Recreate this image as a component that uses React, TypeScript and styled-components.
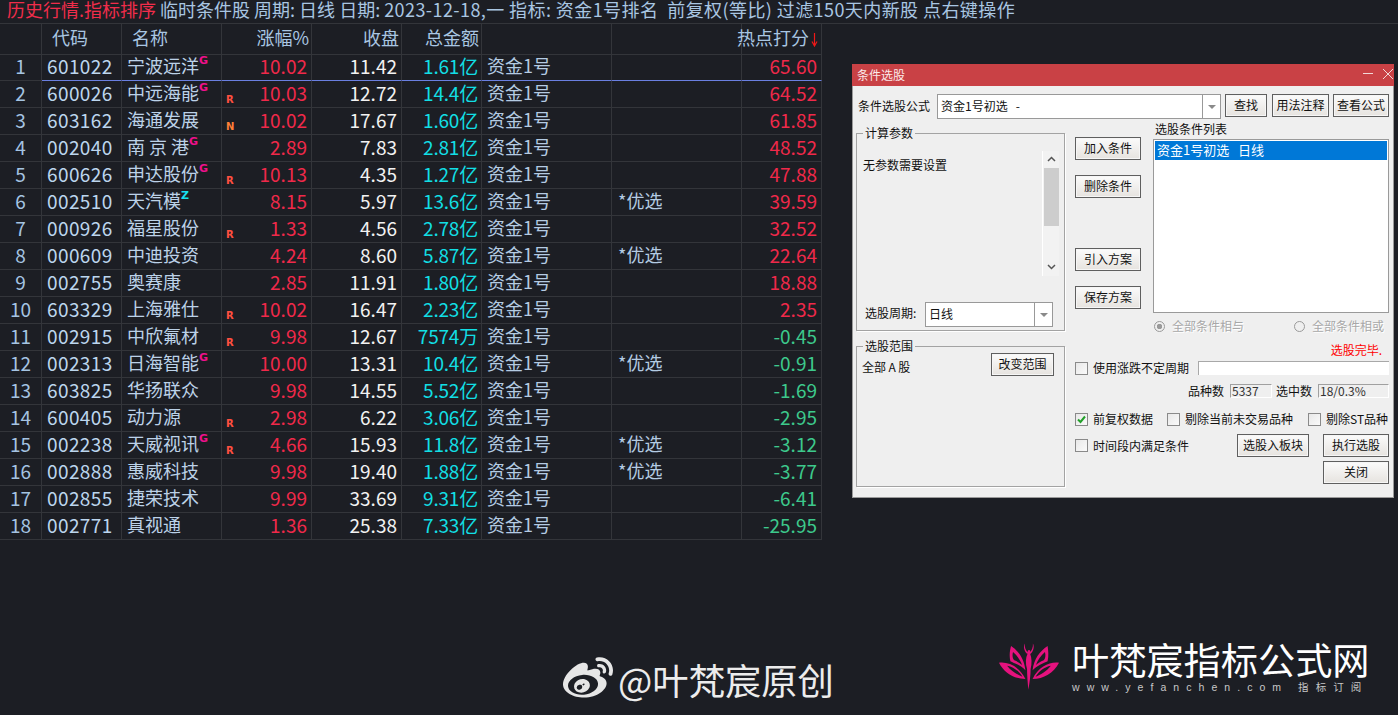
import React from 'react';
import styled, { createGlobalStyle } from 'styled-components';
import { FaWeibo } from 'react-icons/fa';

const Global = createGlobalStyle`
  html, body { margin: 0; padding: 0; background: #1c1e24; }
  * { box-sizing: border-box; }
`;

const CJK = `"Noto Sans CJK SC", "Liberation Sans", sans-serif`;

const Page = styled.div`
  position: relative;
  width: 1398px;
  height: 715px;
  overflow: hidden;
  background: #1c1e24;
  font-family: ${CJK};
`;

const TopBar = styled.div`
  height: 24px;
  border-bottom: 1px solid #33353a;
  padding-left: 7px;
  font-size: 18px;
  line-height: 18px;
  color: #a9c6e2;
  white-space: pre;
`;
const TopRed = styled.span`
  color: #f02d4b;
`;
const TopWide = styled.span`
  letter-spacing: 0.42px;
`;

const Table = styled.div`
  width: 822px;
`;
const Grid = styled.div<{ $h: number }>`
  display: grid;
  grid-template-columns: 42px 80px 100px 90px 90px 80px 130px 130px 80px;
  height: ${p => p.$h}px;
`;
const HeadCell = styled.div<{ $right?: boolean; $pad?: number }>`
  display: flex;
  align-items: center;
  justify-content: ${p => (p.$right ? 'flex-end' : 'flex-start')};
  padding: 0 ${p => (p.$right ? 2 : 0)}px 4px ${p => p.$pad ?? 0}px;
  border-right: 1px solid #33353a;
  border-bottom: 1px solid #33353a;
  font-size: 18px;
  color: #a9c6e2;
  white-space: pre;
`;
const SortArrow = styled.svg`
  flex: none;
  margin: 4px 1px 0 2px;
`;
const Cell = styled.div<{ $active?: boolean }>`
  display: flex;
  align-items: center;
  padding-bottom: 3px;
  border-right: 1px solid #33353a;
  border-bottom: 1px solid ${p => (p.$active ? '#6a7fe0' : '#33353a')};
  font-size: 18px;
  line-height: 23px;
  white-space: pre;
`;
const IndexCell = styled(Cell)`
  justify-content: center;
  color: #a5c4e2;
  font-size: 19px;
`;
const CodeCell = styled(Cell)`
  padding-left: 5px;
  color: #bcd6ee;
  font-size: 19px;
  letter-spacing: 0.4px;
`;
const NameCell = styled(Cell)`
  padding-left: 5px;
  color: #bcd2e8;
`;
const Tag = styled.span<{ $c: string }>`
  align-self: flex-start;
  margin-top: 2px;
  font: bold 11px/10px "DejaVu Sans", sans-serif;
  color: ${p => p.$c};
`;
const NumCell = styled(Cell)<{ $c: string }>`
  justify-content: flex-end;
  padding-right: 4px;
  color: ${p => p.$c};
  font-size: 19px;
`;
const PctCell = styled(NumCell)`
  justify-content: space-between;
  padding-left: 4px;
`;
const Flag = styled.span<{ $c: string }>`
  align-self: flex-end;
  margin-bottom: -2px;
  font: bold 10px/12px "DejaVu Sans", sans-serif;
  color: ${p => p.$c};
`;
const AmountCell = styled(NumCell)`
  padding-right: 3px;
  letter-spacing: -0.2px;
`;
const TextCell = styled(Cell)`
  padding-left: 5px;
  color: #b4cbe2;
`;
const NoteCell = styled(TextCell)`
  padding-left: 6px;
`;

const Dialog = styled.div`
  position: absolute;
  left: 852px;
  top: 64px;
  width: 542px;
  height: 434px;
  background: #efefef;
  border: 1px solid #9a9a9a;
  border-top: 0;
  font-size: 12px;
  line-height: 14px;
  color: #111;
  white-space: pre;
`;
const TitleBar = styled.div`
  height: 22px;
  margin: 0 -1px;
  padding: 0 1px 0 5px;
  display: flex;
  align-items: center;
  justify-content: space-between;
  background: #c94145;
  color: #fbeaea;
`;
const WinIcons = styled.svg`
  display: block;
  margin-bottom: 3px;
`;
const Body = styled.div`
  padding: 8px 4px 0 3px;
`;
const FormulaRow = styled.div`
  display: flex;
  align-items: flex-start;
  height: 25px;
`;
const FormulaLabel = styled.span`
  width: 81px;
  padding: 5px 0 0 2px;
`;
const Combo = styled.div<{ $w: number }>`
  width: ${p => p.$w}px;
  height: 25px;
  display: flex;
  align-items: center;
  justify-content: space-between;
  background: #fff;
  border: 1px solid #999;
  padding-left: 3px;
`;
const ComboText = styled.span`
  margin-bottom: 1px;
`;
const ComboArrow = styled.div`
  width: 18px;
  height: 100%;
  border-left: 1px solid #999;
  display: flex;
  align-items: center;
  justify-content: center;
  &::after {
    content: '';
    border-style: solid;
    border-width: 4px 4px 0;
    border-color: #8a8a8a transparent transparent;
  }
`;
const Btn = styled.div<{ $w: number; $ml?: number }>`
  width: ${p => p.$w}px;
  height: 23px;
  flex: none;
  margin-left: ${p => p.$ml ?? 0}px;
  padding-bottom: 1px;
  display: flex;
  align-items: center;
  justify-content: center;
  border: 1px solid #5f5f5f;
  background: linear-gradient(#fbfbfb, #e6e3df);
  box-shadow: inset 0 0 0 1px #f6f6f6;
  color: #111;
`;
const Main = styled.div`
  display: flex;
  margin-top: 14px;
`;
const LeftCol = styled.div`
  width: 209px;
  flex: none;
  display: flex;
  flex-direction: column;
  gap: 15px;
`;
const Group = styled.div<{ $h: number }>`
  position: relative;
  height: ${p => p.$h}px;
  border: 1px solid #a3a3a3;
  box-shadow: 1px 1px 0 #fff;
`;
const Legend = styled.span`
  position: absolute;
  left: 6px;
  top: -8px;
  padding: 0 2px;
  background: #efefef;
`;
const ParamBody = styled.div`
  height: 100%;
  display: flex;
  flex-direction: column;
  padding: 17px 10px 3px 6px;
`;
const ParamTop = styled.div`
  display: flex;
  justify-content: space-between;
  height: 125px;
`;
const ParamText = styled.span`
  padding-top: 7px;
`;
const ScrollBar = styled.div`
  width: 17px;
  height: 125px;
  background: #f2f2f2;
  border-left: 1px solid #fff;
  display: flex;
  flex-direction: column;
  align-items: center;
  padding-bottom: 2px;
  margin-right: -5px;
`;
const ScrollThumb = styled.div`
  width: 15px;
  height: 58px;
  flex: none;
  margin-bottom: auto;
  background: #cdcdcd;
`;
const Chev = styled.svg<{ $top: number; $bottom: number }>`
  display: block;
  flex: none;
  margin: ${p => p.$top}px 0 ${p => p.$bottom}px;
`;
const PeriodRow = styled.div`
  display: flex;
  align-items: center;
  margin-top: 26px;
  padding-left: 2px;
`;
const PeriodLabel = styled.span`
  width: 60px;
  margin-bottom: 3px;
`;
const RangeBody = styled.div`
  display: flex;
  justify-content: space-between;
  align-items: flex-start;
  padding: 6px 10px 0 5px;
`;
const RangeText = styled.span`
  padding-top: 7px;
`;
const RightCol = styled.div`
  flex: 1;
  min-width: 0;
  padding-left: 10px;
`;
const TopArea = styled.div`
  display: flex;
  height: 180px;
`;
const MidButtons = styled.div`
  width: 78px;
  flex: none;
  padding-top: 4px;
  display: flex;
  flex-direction: column;
`;
const MidBtn = styled(Btn)<{ $mt: number }>`
  margin-top: ${p => p.$mt}px;
`;
const ListCol = styled.div`
  width: 236px;
  flex: none;
`;
const ListLabel = styled.div`
  height: 6px;
  padding-left: 2px;
  transform: translateY(-11px);
`;
const ListBox = styled.div`
  height: 174px;
  background: #fff;
  border: 1px solid #9a9a9a;
  padding: 1px;
`;
const ListItem = styled.div`
  height: 19px;
  background: #0078d7;
  color: #fff;
  font-size: 13px;
  line-height: 18px;
  padding-left: 2px;
`;
const RadioRow = styled.div`
  display: flex;
  align-items: center;
  height: 14px;
  margin: 6px 0 0 79px;
  color: #a8a8a8;
  text-shadow: 1px 1px 0 #fff;
`;
const Radio = styled.span<{ $on?: boolean; $ml?: number }>`
  width: 11px;
  height: 11px;
  margin-left: ${p => p.$ml ?? 0}px;
  margin-right: 7px;
  flex: none;
  border-radius: 50%;
  border: 1px solid #9a9a9a;
  background: radial-gradient(circle, ${p => (p.$on ? '#9a9a9a 0 2.5px' : '#efefef 0 2.5px')}, #efefef 3px);
`;
const Done = styled.div`
  height: 14px;
  margin-top: 10px;
  padding-right: 7px;
  text-align: right;
  color: #f00;
`;
const PeriodInputRow = styled.div`
  display: flex;
  align-items: center;
  margin-top: 4px;
  height: 14px;
`;
const Check = styled.span<{ $ml?: number }>`
  width: 13px;
  height: 13px;
  flex: none;
  margin-left: ${p => p.$ml ?? 0}px;
  margin-right: 5px;
  border: 1px solid #8a8a8a;
  background: linear-gradient(135deg, #e8e8e8, #fafafa);
  display: flex;
  align-items: center;
  justify-content: center;
`;
const BlankInput = styled.div`
  width: 191px;
  height: 14px;
  margin-left: 9px;
  background: #fff;
  border-top: 1px solid #a8a8a8;
  border-left: 1px solid #a8a8a8;
`;
const CountRow = styled.div`
  display: flex;
  align-items: center;
  justify-content: flex-end;
  height: 14px;
  margin-top: 9px;
`;
const CountBox = styled.div<{ $w: number; $mr?: number }>`
  width: ${p => p.$w}px;
  height: 14px;
  margin: 0 ${p => p.$mr ?? 0}px 0 6px;
  border-top: 1px solid #a0a0a0;
  border-left: 1px solid #a0a0a0;
  border-right: 1px solid #fff;
  border-bottom: 1px solid #fff;
  color: #333;
  line-height: 12px;
  padding-left: 1px;
`;
const OptionRow = styled.div`
  display: flex;
  align-items: center;
  height: 14px;
  margin-top: 14px;
`;
const ActionRow = styled.div`
  display: flex;
  align-items: center;
  height: 23px;
  margin-top: 8px;
`;
const CloseRow = styled.div`
  display: flex;
  justify-content: flex-end;
  margin-top: 4px;
`;

const Mark = styled.div`
  position: absolute;
  color: #ececec;
`;
const WeiboMark = styled(Mark)`
  left: 563px;
  top: 650px;
  display: flex;
  align-items: center;
  gap: 5px;
  height: 58px;
  font-size: 36.3px;
  line-height: 58px;
  font-weight: 400;
  white-space: pre;
`;
const SiteMark = styled(Mark)`
  left: 998px;
  top: 639px;
  display: flex;
  gap: 12px;
  white-space: pre;
`;
const SiteText = styled.div`
  display: flex;
  flex-direction: column;
`;
const SiteTitle = styled.div`
  font-size: 37.2px;
  line-height: 40px;
  font-weight: 400;
  color: #fff;
`;
const SiteSub = styled.div`
  margin-top: 1px;
  font-size: 10.5px;
  line-height: 14px;
  letter-spacing: 7.05px;
  color: #c8c8c8;
  font-family: "Liberation Sans", ${CJK};
`;
const Lotus = styled.svg`
  display: block;
  margin-top: 2px;
`;

const RED = '#f0294a';
const GREEN = '#3dc98c';
const WHITE = '#f2f2f2';
const CYAN = '#12dfe4';

type Row = {
  code: string; name: string; tag?: 'G' | 'Z'; flag?: 'R' | 'N';
  pct: string; close: string; amt: string; star?: boolean; score: string;
};
const rows: Row[] = [
  { code: '601022', name: '宁波远洋', tag: 'G', pct: '10.02', close: '11.42', amt: '1.61亿', score: '65.60' },
  { code: '600026', name: '中远海能', tag: 'G', flag: 'R', pct: '10.03', close: '12.72', amt: '14.4亿', score: '64.52' },
  { code: '603162', name: '海通发展', flag: 'N', pct: '10.02', close: '17.67', amt: '1.60亿', score: '61.85' },
  { code: '002040', name: '南 京 港', tag: 'G', pct: '2.89', close: '7.83', amt: '2.81亿', score: '48.52' },
  { code: '600626', name: '申达股份', tag: 'G', flag: 'R', pct: '10.13', close: '4.35', amt: '1.27亿', score: '47.88' },
  { code: '002510', name: '天汽模', tag: 'Z', pct: '8.15', close: '5.97', amt: '13.6亿', star: true, score: '39.59' },
  { code: '000926', name: '福星股份', flag: 'R', pct: '1.33', close: '4.56', amt: '2.78亿', score: '32.52' },
  { code: '000609', name: '中迪投资', pct: '4.24', close: '8.60', amt: '5.87亿', star: true, score: '22.64' },
  { code: '002755', name: '奥赛康', pct: '2.85', close: '11.91', amt: '1.80亿', score: '18.88' },
  { code: '603329', name: '上海雅仕', flag: 'R', pct: '10.02', close: '16.47', amt: '2.23亿', score: '2.35' },
  { code: '002915', name: '中欣氟材', flag: 'R', pct: '9.98', close: '12.67', amt: '7574万', score: '-0.45' },
  { code: '002313', name: '日海智能', tag: 'G', pct: '10.00', close: '13.31', amt: '10.4亿', star: true, score: '-0.91' },
  { code: '603825', name: '华扬联众', pct: '9.98', close: '14.55', amt: '5.52亿', score: '-1.69' },
  { code: '600405', name: '动力源', flag: 'R', pct: '2.98', close: '6.22', amt: '3.06亿', score: '-2.95' },
  { code: '002238', name: '天威视讯', tag: 'G', flag: 'R', pct: '4.66', close: '15.93', amt: '11.8亿', star: true, score: '-3.12' },
  { code: '002888', name: '惠威科技', pct: '9.98', close: '19.40', amt: '1.88亿', star: true, score: '-3.77' },
  { code: '002855', name: '捷荣技术', pct: '9.99', close: '33.69', amt: '9.31亿', score: '-6.41' },
  { code: '002771', name: '真视通', pct: '1.36', close: '25.38', amt: '7.33亿', score: '-25.95' },
];

const CheckMark = () => (
  <svg width="9" height="9" viewBox="0 0 9 9">
    <path d="M1 4.5 L3.5 7 L8 1.5" fill="none" stroke="#22a02a" strokeWidth="2" />
  </svg>
);

export default function App() {
  return (
    <Page>
      <Global />
      <TopBar>
        <TopRed>历史行情.指标排序</TopRed>
        {' 临时条件股 周期: 日线 日期: '}
        <TopWide>2023-12-18,一 指标: 资金1号排名  前复权(等比) 过滤150天内新股 点右键操作</TopWide>
      </TopBar>
      <Table>
        <Grid $h={30}>
          <HeadCell />
          <HeadCell $pad={10}>代码</HeadCell>
          <HeadCell $pad={10}>名称</HeadCell>
          <HeadCell $right>涨幅%</HeadCell>
          <HeadCell $right>收盘</HeadCell>
          <HeadCell $right>总金额</HeadCell>
          <HeadCell />
          <HeadCell />
          <HeadCell $right>
            热点打分
            <SortArrow width="7" height="15" viewBox="0 0 7 15">
              <path d="M3.5 1 V13 M1 9.5 L3.5 14 L6 9.5" fill="none" stroke="#f01818" strokeWidth="1.2" />
            </SortArrow>
          </HeadCell>
        </Grid>
        {rows.map((r, i) => {
          const a = i === 0;
          return (
            <Grid $h={27} key={r.code}>
              <IndexCell>{i + 1}</IndexCell>
              <CodeCell $active={a}>{r.code}</CodeCell>
              <NameCell $active={a}>
                {r.name}
                {r.tag && <Tag $c={r.tag === 'G' ? '#f0108c' : '#18e0f0'}>{r.tag}</Tag>}
              </NameCell>
              <PctCell $active={a} $c={RED}>
                <Flag $c={r.flag === 'N' ? '#ff8038' : '#ff5040'}>{r.flag ?? ''}</Flag>
                {r.pct}
              </PctCell>
              <NumCell $active={a} $c={WHITE}>{r.close}</NumCell>
              <AmountCell $active={a} $c={CYAN}>{r.amt}</AmountCell>
              <TextCell $active={a}>资金1号</TextCell>
              <NoteCell $active={a}>{r.star ? '*优选' : ''}</NoteCell>
              <NumCell $active={a} $c={r.score.startsWith('-') ? GREEN : RED}>{r.score}</NumCell>
            </Grid>
          );
        })}
      </Table>

      <Dialog>
        <TitleBar>
          条件选股
          <WinIcons width="31" height="10" viewBox="0 0 31 10">
            <path d="M1 4.5 H11 M21 0 L31 10 M31 0 L21 10" stroke="#f2d8d8" strokeWidth="1" fill="none" />
          </WinIcons>
        </TitleBar>
        <Body>
          <FormulaRow>
            <FormulaLabel>条件选股公式</FormulaLabel>
            <Combo $w={284}>
              <ComboText>资金1号初选   -</ComboText>
              <ComboArrow />
            </Combo>
            <Btn $w={42} $ml={4}>查找</Btn>
            <Btn $w={57} $ml={5}>用法注释</Btn>
            <Btn $w={56} $ml={4}>查看公式</Btn>
          </FormulaRow>
          <Main>
            <LeftCol>
              <Group $h={198}>
                <Legend>计算参数</Legend>
                <ParamBody>
                  <ParamTop>
                    <ParamText>无参数需要设置</ParamText>
                    <ScrollBar>
                      <Chev $top={5} $bottom={6} width="9" height="6" viewBox="0 0 9 6">
                        <path d="M1 5 L4.5 1.5 L8 5" fill="none" stroke="#555" strokeWidth="1.5" />
                      </Chev>
                      <ScrollThumb />
                      <Chev $top={4} $bottom={4} width="9" height="6" viewBox="0 0 9 6">
                        <path d="M1 1 L4.5 4.5 L8 1" fill="none" stroke="#555" strokeWidth="1.5" />
                      </Chev>
                    </ScrollBar>
                  </ParamTop>
                  <PeriodRow>
                    <PeriodLabel>选股周期:</PeriodLabel>
                    <Combo $w={128}>
                      <ComboText>日线</ComboText>
                      <ComboArrow />
                    </Combo>
                  </PeriodRow>
                </ParamBody>
              </Group>
              <Group $h={141}>
                <Legend>选股范围</Legend>
                <RangeBody>
                  <RangeText>全部{'\u2009'}A{'\u2009'}股</RangeText>
                  <Btn $w={63}>改变范围</Btn>
                </RangeBody>
              </Group>
            </LeftCol>
            <RightCol>
              <TopArea>
                <MidButtons>
                  <MidBtn $w={66} $mt={0}>加入条件</MidBtn>
                  <MidBtn $w={66} $mt={15}>删除条件</MidBtn>
                  <MidBtn $w={66} $mt={50}>引入方案</MidBtn>
                  <MidBtn $w={66} $mt={15}>保存方案</MidBtn>
                </MidButtons>
                <ListCol>
                  <ListLabel>选股条件列表</ListLabel>
                  <ListBox>
                    <ListItem>资金1号初选   日线</ListItem>
                  </ListBox>
                </ListCol>
              </TopArea>
              <RadioRow>
                <Radio $on />
                全部条件相与
                <Radio $ml={50} />
                全部条件相或
              </RadioRow>
              <Done>选股完毕.</Done>
              <PeriodInputRow>
                <Check />
                使用涨跌不定周期
                <BlankInput />
              </PeriodInputRow>
              <CountRow>
                品种数
                <CountBox $w={42} $mr={4}>5337</CountBox>
                选中数
                <CountBox $w={71}>18/0.3%</CountBox>
              </CountRow>
              <OptionRow>
                <Check><CheckMark /></Check>
                前复权数据
                <Check $ml={14} />
                剔除当前未交易品种
                <Check $ml={15} />
                剔除ST品种
              </OptionRow>
              <ActionRow>
                <Check />
                时间段内满足条件
                <Btn $w={72} $ml={48}>选股入板块</Btn>
                <Btn $w={66} $ml={14}>执行选股</Btn>
              </ActionRow>
              <CloseRow>
                <Btn $w={66}>关闭</Btn>
              </CloseRow>
            </RightCol>
          </Main>
        </Body>
      </Dialog>

      <WeiboMark>
        <FaWeibo size={50} color="#e6e6e6" />
        @叶梵宸原创
      </WeiboMark>
      <SiteMark>
        <Lotus width="62" height="52" viewBox="22 35 190 158">
          <g fill="#e5127e">
            <path d="M25 101 C52 97 88 112 106 151 C72 150 42 134 25 101 Z M50 110 C64 128 82 138 97 144 C86 126 70 114 50 110 Z" fillRule="evenodd" />
            <path d="M209 101 C182 97 146 112 128 151 C162 150 192 134 209 101 Z M184 110 C170 128 152 138 137 144 C148 126 164 114 184 110 Z" fillRule="evenodd" />
            <path d="M62 50 C86 66 102 90 106 124 C94 110 72 102 60 96 C56 80 58 64 62 50 Z M68 68 C65 80 67 89 72 93 C82 97 90 102 96 108 C90 92 80 78 68 68 Z" fillRule="evenodd" />
            <path d="M174 50 C150 66 132 90 128 124 C140 110 162 102 174 96 C178 80 176 64 174 50 Z M166 68 C169 80 167 89 162 93 C152 97 144 102 138 108 C144 92 154 78 166 68 Z" fillRule="evenodd" />
            <path d="M117 62 C121 62 122 67 120 72 C126 86 126 104 122 120 C122 140 119 160 115 184 C113 160 111 140 111 120 C106 104 106 86 113 72 C112 67 113 62 117 62 Z" />
            <path d="M112 74 C102 66 99 52 104 42 C103 54 107 64 115 70 Z M121 74 C131 66 134 52 129 42 C130 54 126 64 118 70 Z" />
          </g>
        </Lotus>
        <SiteText>
          <SiteTitle>叶梵宸指标公式网</SiteTitle>
          <SiteSub>www.yefanchen.com 指标订阅</SiteSub>
        </SiteText>
      </SiteMark>
    </Page>
  );
}
